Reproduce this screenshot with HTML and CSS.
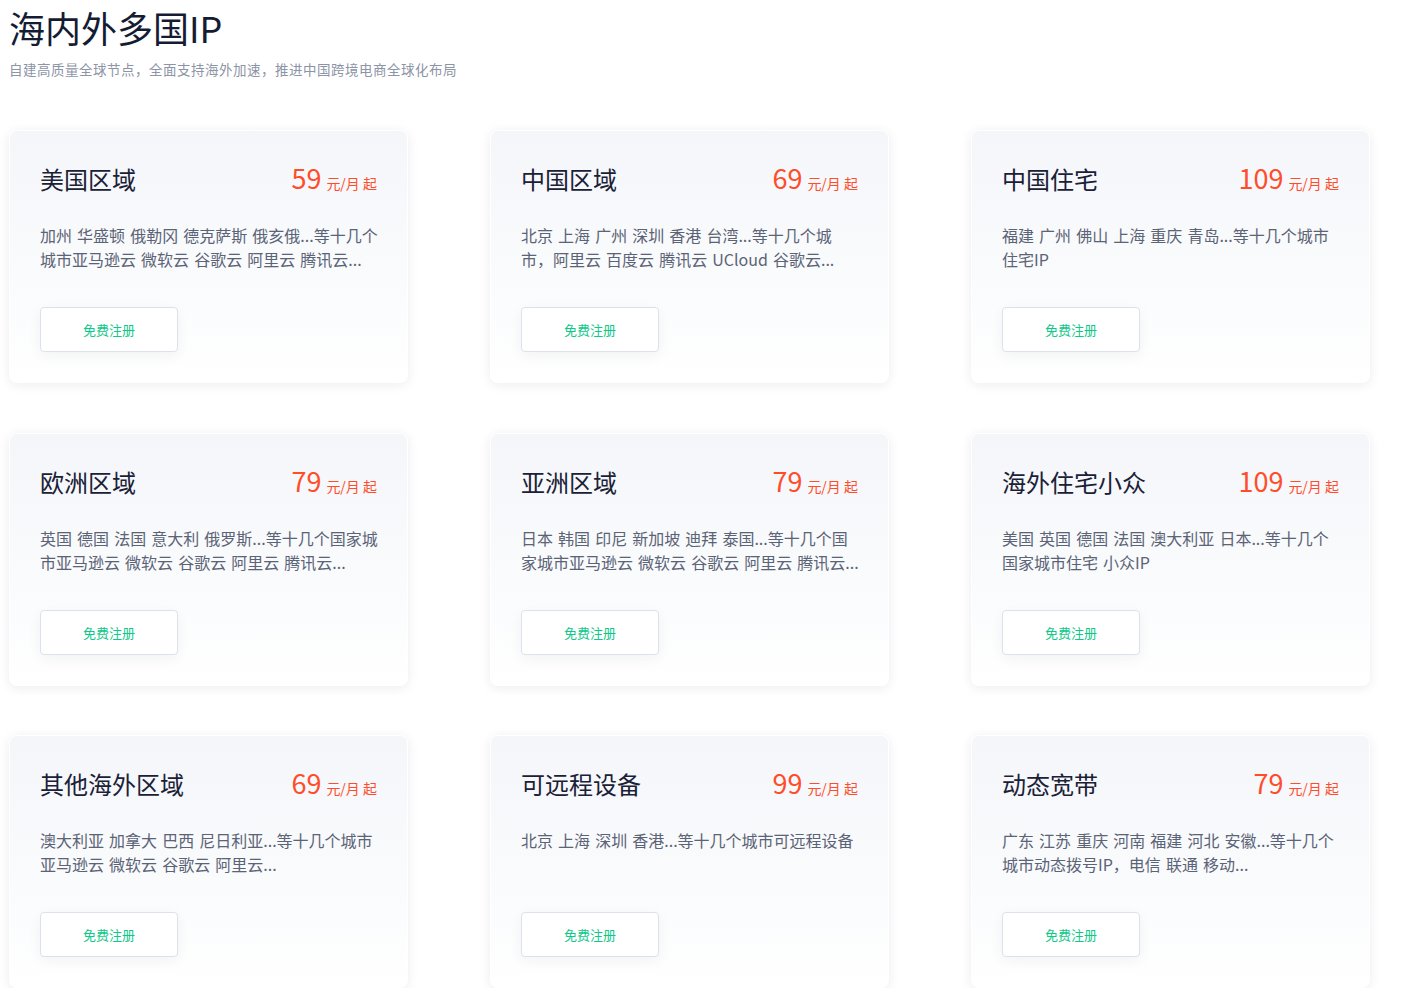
FILE: index.html
```html
<!DOCTYPE html>
<html lang="zh-CN">
<head>
<meta charset="utf-8">
<title>海内外多国IP</title>
<link rel="stylesheet" href="styles.css">
</head>
<body>
<div class="page">
  <header class="head">
    <h1 class="head-title">海内外多国IP</h1>
    <p class="head-sub">自建高质量全球节点，全面支持海外加速，推进中国跨境电商全球化布局</p>
  </header>
  <div class="grid">
    <div class="card">
      <div class="card-top"><h2 class="card-title">美国区域</h2><div class="price"><span class="num">59</span><span class="unit">元/月 起</span></div></div>
      <p class="desc">加州 华盛顿 俄勒冈 德克萨斯 俄亥俄...等十几个城市亚马逊云 微软云 谷歌云 阿里云 腾讯云...</p>
      <a class="btn">免费注册</a>
    </div>
    <div class="card">
      <div class="card-top"><h2 class="card-title">中国区域</h2><div class="price"><span class="num">69</span><span class="unit">元/月 起</span></div></div>
      <p class="desc">北京 上海 广州 深圳 香港 台湾...等十几个城市，阿里云 百度云 腾讯云 UCloud 谷歌云...</p>
      <a class="btn">免费注册</a>
    </div>
    <div class="card">
      <div class="card-top"><h2 class="card-title">中国住宅</h2><div class="price"><span class="num">109</span><span class="unit">元/月 起</span></div></div>
      <p class="desc">福建 广州 佛山 上海 重庆 青岛...等十几个城市住宅IP</p>
      <a class="btn">免费注册</a>
    </div>
    <div class="card">
      <div class="card-top"><h2 class="card-title">欧洲区域</h2><div class="price"><span class="num">79</span><span class="unit">元/月 起</span></div></div>
      <p class="desc">英国 德国 法国 意大利 俄罗斯...等十几个国家城市亚马逊云 微软云 谷歌云 阿里云 腾讯云...</p>
      <a class="btn">免费注册</a>
    </div>
    <div class="card">
      <div class="card-top"><h2 class="card-title">亚洲区域</h2><div class="price"><span class="num">79</span><span class="unit">元/月 起</span></div></div>
      <p class="desc">日本 韩国 印尼 新加坡 迪拜 泰国...等十几个国家城市亚马逊云 微软云 谷歌云 阿里云 腾讯云...</p>
      <a class="btn">免费注册</a>
    </div>
    <div class="card">
      <div class="card-top"><h2 class="card-title">海外住宅小众</h2><div class="price"><span class="num">109</span><span class="unit">元/月 起</span></div></div>
      <p class="desc">美国 英国 德国 法国 澳大利亚 日本...等十几个国家城市住宅 小众IP</p>
      <a class="btn">免费注册</a>
    </div>
    <div class="card">
      <div class="card-top"><h2 class="card-title">其他海外区域</h2><div class="price"><span class="num">69</span><span class="unit">元/月 起</span></div></div>
      <p class="desc">澳大利亚 加拿大 巴西 尼日利亚...等十几个城市亚马逊云 微软云 谷歌云 阿里云...</p>
      <a class="btn">免费注册</a>
    </div>
    <div class="card">
      <div class="card-top"><h2 class="card-title">可远程设备</h2><div class="price"><span class="num">99</span><span class="unit">元/月 起</span></div></div>
      <p class="desc">北京 上海 深圳 香港...等十几个城市可远程设备</p>
      <a class="btn">免费注册</a>
    </div>
    <div class="card">
      <div class="card-top"><h2 class="card-title">动态宽带</h2><div class="price"><span class="num">79</span><span class="unit">元/月 起</span></div></div>
      <p class="desc">广东 江苏 重庆 河南 福建 河北 安徽...等十几个城市动态拨号IP，电信 联通 移动...</p>
      <a class="btn">免费注册</a>
    </div>
  </div>
</div>
</body>
</html>
```

FILE: styles.css
```css
* { box-sizing: border-box; }
html, body { margin: 0; padding: 0; background: #fff; }
body {
  font-family: "Noto Sans CJK SC", "Noto Sans", sans-serif;
  color: #1b2236;
}
.page { padding: 0 0 0 9px; }
.head { padding-top: 4px; }
.head-title {
  margin: 0;
  font-size: 36px;
  font-weight: 400;
  line-height: 46px;
  color: #141c33;
}
.head-sub {
  margin: 10px 0 0 0;
  font-size: 13.5px;
  letter-spacing: 0.5px;
  line-height: 18px;
  color: #8c94a5;
}
.grid {
  margin-top: 52px;
  display: grid;
  grid-template-columns: repeat(3, 399px);
  column-gap: 82px;
  row-gap: 49.5px;
}
.card {
  height: 253px;
  border-radius: 8px;
  border: 1px solid #fff;
  background: linear-gradient(180deg, #f4f6fa 0%, #fbfcfd 70%, #ffffff 100%);
  box-shadow: 0 2px 12px rgba(20, 30, 60, 0.08);
  padding: 31px 28px 30px 30px;
  display: flex;
  flex-direction: column;
  align-items: flex-start;
}
.card-top {
  width: 100%;
  padding-right: 2px;
  display: flex;
  justify-content: space-between;
  align-items: baseline;
  height: 32px;
}
.card-title {
  margin: 0;
  font-size: 24px;
  font-weight: 400;
  line-height: 32px;
  color: #1a2136;
}
.price { color: #ff4d2a; white-space: nowrap; }
.price .num { font-size: 27px; line-height: 32px; }
.price .unit { font-size: 14px; margin-left: 5px; }
.desc {
  margin: 29px 0 0 0;
  font-size: 16px;
  word-spacing: 1.5px;
  line-height: 24px;
  color: #5b6376;
  height: 48px;
  overflow: hidden;
  width: 100%;
}
.btn {
  margin-top: 36px;
  width: 138px;
  height: 45px;
  border: 1px solid #dde2ea;
  border-radius: 4px;
  background: #fff;
  box-shadow: 0 4px 14px rgba(20, 30, 60, 0.05);
  display: flex;
  align-items: center;
  justify-content: center;
  font-size: 13px;
  color: #0fc88a;
  text-decoration: none;
}
```
